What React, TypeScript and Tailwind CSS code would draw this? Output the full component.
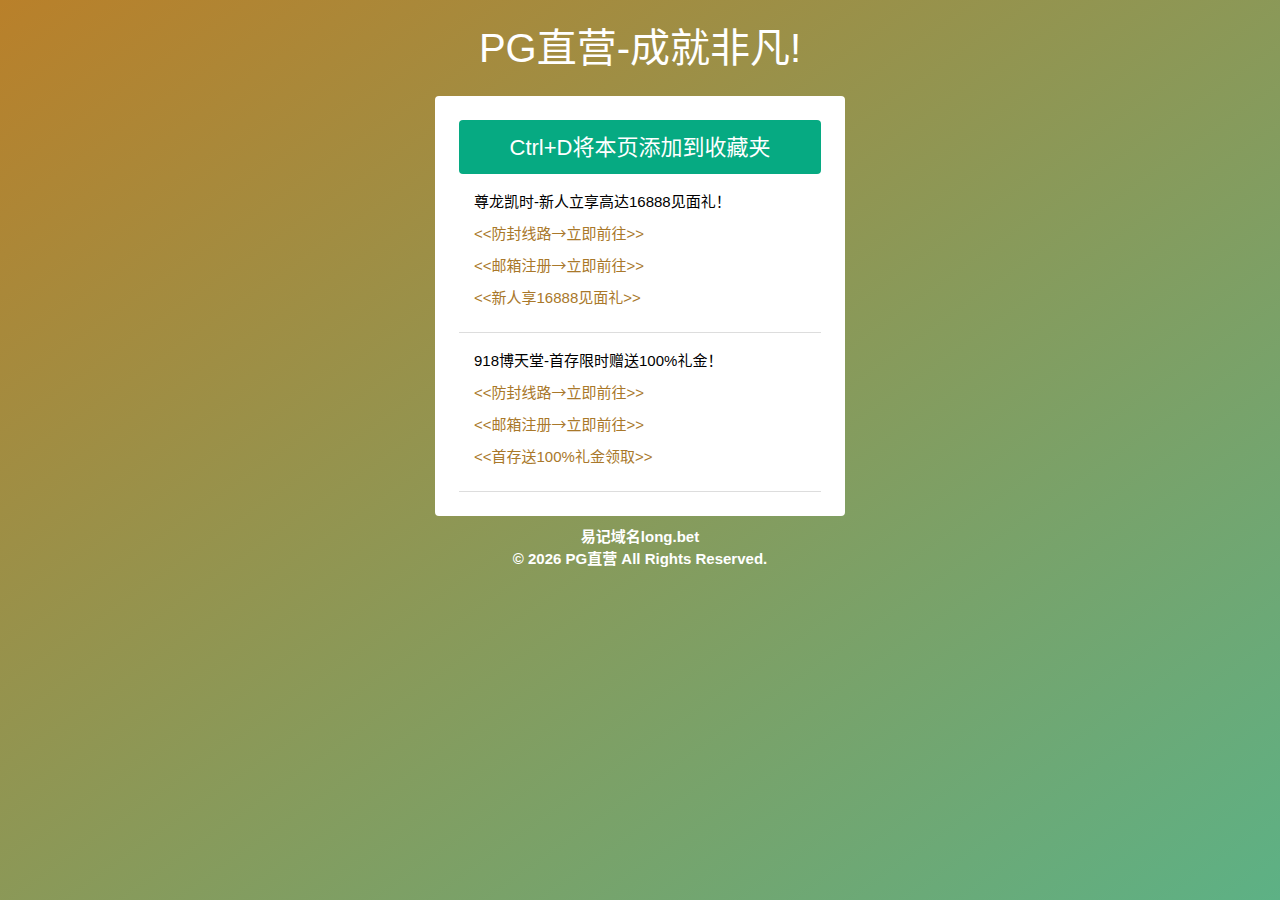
const groups = [
  {
    title: "尊龙凯时-新人立享高达16888见面礼！",
    links: [
      ["<<防封线路", "立即前往>>"],
      ["<<邮箱注册", "立即前往>>"],
      ["<<新人享16888见面礼>>"],
    ],
  },
  {
    title: "918博天堂-首存限时赠送100%礼金！",
    links: [
      ["<<防封线路", "立即前往>>"],
      ["<<邮箱注册", "立即前往>>"],
      ["<<首存送100%礼金领取>>"],
    ],
  },
];

export default function App() {
  return (
    <div className="min-h-screen w-full bg-[linear-gradient(to_bottom_right,#b9802a,#5db185)] font-['Liberation_Sans','Noto_Sans_CJK_SC',sans-serif] pt-[26px]">
      <h1 className="text-center text-[40px] leading-[44px] font-normal text-white">PG直营-成就非凡!</h1>

      <div className="mx-auto mt-[26px] w-[410px] rounded bg-white p-6">
        <button className="block h-[54px] w-full rounded bg-[#06aa82] text-[22px] text-white">
          Ctrl+D将本页添加到收藏夹
        </button>

        {groups.map((g) => (
          <ul key={g.title} className="border-b border-[#dddddd] pt-3 pb-[18px] pl-[15px] text-[15px] leading-[32px]">
            <li className="h-8 text-black">{g.title}</li>
            {g.links.map((l, i) => (
              <li key={i} className="h-8 overflow-hidden">
                <a href="#" className="text-[#a9782a]">
                  {l[0]}
                  {l.length > 1 && (
                    <>
                      <span className="font-['Noto_Sans_CJK_SC',sans-serif] leading-none">→</span>
                      {l[1]}
                    </>
                  )}
                </a>
              </li>
            ))}
          </ul>
        ))}
      </div>

      <div className="mt-[10px] text-center text-[15px] leading-[22px] font-bold text-white">
        <p>易记域名long.bet</p>
        <p>© 2026 PG直营 All Rights Reserved.</p>
      </div>
    </div>
  );
}
